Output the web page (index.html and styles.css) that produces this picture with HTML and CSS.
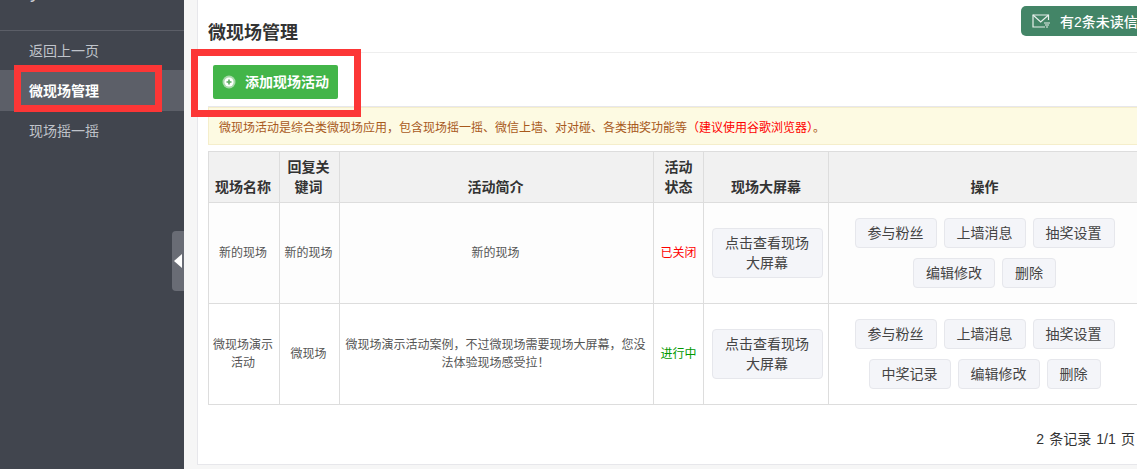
FILE: index.html
```html
<!DOCTYPE html>
<html lang="zh-CN">
<head>
<meta charset="utf-8">
<title>微现场管理</title>
<link rel="stylesheet" href="styles.css">
</head>
<body>
<div class="app">
  <aside class="sidebar">
    <div class="brand"><span class="brand-text">y</span></div>
    <nav class="nav">
      <a class="nav-item">返回上一页</a>
      <a class="nav-item active">微现场管理</a>
      <a class="nav-item">现场摇一摇</a>
    </nav>
    <div class="collapse"><span class="collapse-arrow"></span></div>
  </aside>
  <main class="content">
    <section class="panel">
      <header class="panel-head"><h1 class="title">微现场管理</h1></header>
      <div class="toolbar">
        <a class="add-btn">
          <svg class="add-icon" viewBox="0 0 14 14" width="14" height="14"><circle cx="7" cy="7" r="6.5" fill="#a9d9ac"/><circle cx="7" cy="7" r="4.6" fill="#fff"/><path d="M7 4.500v5M4.500 7h5" stroke="#5aa95f" stroke-width="1.6"/></svg>
          <span class="add-label">添加现场活动</span>
        </a>
      </div>
      <div class="notice">微现场活动是综合类微现场应用，包含现场摇一摇、微信上墙、对对碰、各类抽奖功能等<span class="notice-hot">（建议使用谷歌浏览器）</span>。</div>
      <table class="grid">
        <colgroup>
          <col class="c-name"><col class="c-key"><col class="c-desc"><col class="c-state"><col class="c-screen"><col class="c-ops">
        </colgroup>
        <thead>
          <tr><th class="nudge">现场名称</th><th class="nudge">回复关键词</th><th class="nudge">活动简介</th><th>活动状态</th><th>现场大屏幕</th><th class="nudge">操作</th></tr>
        </thead>
        <tbody>
          <tr>
            <td class="nudge">新的现场</td><td class="nudge">新的现场</td><td class="nudge">新的现场</td>
            <td><span class="closed">已关闭</span></td>
            <td class="screen-cell"><a class="btn btn-screen">点击查看现场大屏幕</a></td>
            <td class="nudge"><div class="ops"><a class="btn">参与粉丝</a><a class="btn">上墙消息</a><a class="btn">抽奖设置</a><a class="btn">编辑修改</a><a class="btn">删除</a></div></td>
          </tr>
          <tr>
            <td class="nudge">微现场演示活动</td><td class="nudge">微现场</td><td class="nudge">微现场演示活动案例，不过微现场需要现场大屏幕，您没法体验现场感受拉！</td>
            <td><span class="running">进行中</span></td>
            <td class="screen-cell"><a class="btn btn-screen">点击查看现场大屏幕</a></td>
            <td class="nudge"><div class="ops"><a class="btn">参与粉丝</a><a class="btn">上墙消息</a><a class="btn">抽奖设置</a><a class="btn">中奖记录</a><a class="btn">编辑修改</a><a class="btn">删除</a></div></td>
          </tr>
        </tbody>
      </table>
      <div class="pager">2 条记录 1/1 页</div>
    </section>
  </main>
</div>
<a class="mail-badge">
  <svg class="mail-icon" viewBox="0 0 19 14" width="19" height="14" fill="none" stroke="#e8f0ec" stroke-width="1.2"><path d="M13 13H1V1h15.500v5"/><path d="M1 1l7.700 7L16.500 1"/><path d="M12 9h6M13 11h4M14 13h2"/></svg>
  <span>有2条未读信息</span>
</a>
<div class="mark mark-nav"></div>
<div class="mark mark-add"></div>
</body>
</html>
```
FILE: styles.css
```css
* { box-sizing: border-box; }
html, body { margin: 0; height: 100%; overflow: hidden; }
body {
  background: #f6f6f6;
  font-family: "Liberation Sans", "Noto Sans CJK SC", sans-serif;
  color: #333;
}
.app { display: flex; height: 469px; width: 1137px; overflow: hidden; }

.sidebar { position: relative; flex: 0 0 184px; background: #41454e; }
.brand { height: 31px; border-bottom: 1px solid #5b5e67; overflow: hidden; padding-left: 30px; }
.brand-text { display: block; margin-top: -21px; font-size: 20px; line-height: 24px; color: #c8ccd2; }
.nav { display: flex; flex-direction: column; margin-top: -1px; }
.nav-item { display: flex; align-items: center; height: 40px; padding-left: 29px; font-size: 14px; color: #c0c4cb; }
.nav-item.active { background: #5c5f68; box-shadow: 0 1px 0 #5c5f68; color: #fff; font-weight: 700; }
.collapse { position: absolute; right: 0; top: 231px; width: 12px; height: 60px; background: #696c75; border-radius: 4px 0 0 4px; display: flex; align-items: center; padding-left: 2px; }
.collapse-arrow { width: 0; height: 0; border-style: solid; border-width: 7px 8px 7px 0; border-color: transparent #fff transparent transparent; }

.content { flex: 1 1 auto; min-width: 0; padding: 0 0 4px 13px; }
.panel { width: 1000px; height: 465px; background: #fff; border: 1px solid #e7e7eb; border-top: 0; padding: 0 10px; }
.panel-head { height: 53px; margin: 0 -10px; padding: 23px 10px 0; border-bottom: 1px solid #eeeeee; }
.title { margin: 0; font-size: 18px; line-height: 21px; font-weight: 700; color: #333; }
.toolbar { height: 54px; padding: 12px 0 0 5px; border-bottom: 1px solid #e7e7eb; }
.add-btn { display: inline-flex; align-items: center; width: 125px; height: 34px; padding-left: 9px; gap: 9px; background: #43b549; border-radius: 2px; color: #fff; font-size: 14px; font-weight: 700; }
.add-icon { flex: none; }
.add-label { padding-bottom: 2px; }
.notice { height: 38px; line-height: 38px; padding: 1px 0 0 10px; font-size: 12px; background: #fdfae2; border: 1px solid #f5eecb; color: #a8591c; white-space: nowrap; }
.notice-hot { color: #f00; }

.grid { table-layout: fixed; width: 934px; border-collapse: collapse; margin-top: 6px; font-size: 12px; color: #555; }
.c-name { width: 71px; } .c-key { width: 60px; } .c-desc { width: 314px; } .c-state { width: 50px; } .c-screen { width: 125px; } .c-ops { width: 314px; }
.grid th, .grid td { border: 1px solid #dddddd; text-align: center; padding: 5px; }
.grid th { height: 51px; background: #f1f1f1; font-size: 14px; line-height: 20px; font-weight: 700; color: #333; vertical-align: bottom; padding: 4px 5px 5px; }
.grid td { height: 101px; line-height: 18px; vertical-align: middle; background: #fdfdfd; }
.grid tbody tr:last-child td { background: #fff; }
.grid .nudge { padding-left: 4px; padding-right: 6px; }
.grid .screen-cell { padding-left: 6px; padding-right: 4px; }
.closed { color: #f00; }
.running { color: #090; }

.btn { display: inline-block; height: 30px; padding: 0 12px; line-height: 28px; font-size: 14px; color: #444; background: #f4f5f9; border: 1px solid #e6e7ec; border-radius: 4px; white-space: nowrap; }
.btn-screen { width: 111px; height: 50px; line-height: 20px; padding: 4px 12px; white-space: normal; vertical-align: middle; }
.ops { display: flex; flex-wrap: wrap; justify-content: center; gap: 10px 7px; width: 270px; margin: 0 auto; }

.pager { margin-top: 24px; width: 927px; text-align: right; font-size: 14px; line-height: 20px; word-spacing: 1.3px; color: #333; }

.mail-badge { position: absolute; left: 1021px; top: 6px; display: flex; align-items: center; gap: 9px; width: 140px; height: 30px; padding-left: 11px; background: #438567; border-radius: 5px; color: #fff; font-size: 14px; font-weight: 500; white-space: nowrap; }
.mail-icon { flex: none; }

.mark { position: absolute; border: 7px solid #fc3636; }
.mark-nav { left: 14px; top: 65px; width: 148px; height: 47px; }
.mark-add { left: 191px; top: 49px; width: 170px; height: 68px; }
```
